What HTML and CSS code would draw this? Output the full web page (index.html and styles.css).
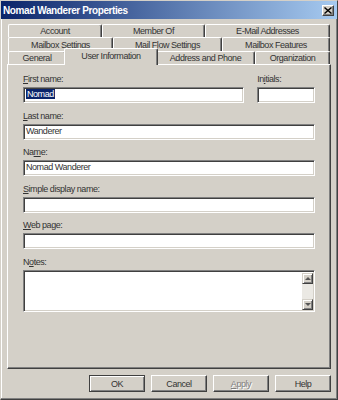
FILE: index.html
```html
<!DOCTYPE html>
<html lang="en">
<head>
    <meta charset="UTF-8">
    <title>Nomad Wanderer Properties</title>
    <link rel="stylesheet" href="styles.css">
</head>
<body>
    <div class="window">
        <!-- Title bar -->
        <div class="titlebar">
            <span class="title">Nomad Wanderer Properties</span>
            <span class="close-btn">
                <svg width="8" height="7" viewBox="0 0 8 7"><path d="M0.5 0.5L7.5 6.5M7.5 0.5L0.5 6.5" stroke="#000" stroke-width="1.4"/></svg>
            </span>
        </div>

        <!-- Tabs, three rows -->
        <div class="tabs">
            <div class="tab-row row-top">
                <div class="tab tab-account">Account</div>
                <div class="tab tab-member">Member Of</div>
                <div class="tab tab-email">E-Mail Addresses</div>
            </div>
            <div class="tab-row row-mid">
                <div class="tab tab-mbsettings">Mailbox Settings</div>
                <div class="tab tab-mailflow">Mail Flow Settings</div>
                <div class="tab tab-features">Mailbox Features</div>
            </div>
            <div class="tab-row row-front">
                <div class="tab tab-general">General</div>
                <div class="tab tab-userinfo selected">User Information</div>
                <div class="tab tab-address">Address and Phone</div>
                <div class="tab tab-org">Organization</div>
            </div>
        </div>

        <!-- Tab page -->
        <div class="panel">
            <div class="field-row">
                <div class="field field-first">
                    <div class="label"><u>F</u>irst name:</div>
                    <div class="box"><span class="selected-text">Nomad</span></div>
                </div>
                <div class="field field-initials">
                    <div class="label">In<u>i</u>tials:</div>
                    <div class="box"></div>
                </div>
            </div>
            <div class="field">
                <div class="label"><u>L</u>ast name:</div>
                <div class="box">Wanderer</div>
            </div>
            <div class="field">
                <div class="label">Na<u>m</u>e:</div>
                <div class="box">Nomad Wanderer</div>
            </div>
            <div class="field">
                <div class="label"><u>S</u>imple display name:</div>
                <div class="box"></div>
            </div>
            <div class="field">
                <div class="label"><u>W</u>eb page:</div>
                <div class="box"></div>
            </div>
            <div class="field">
                <div class="label">N<u>o</u>tes:</div>
                <div class="box notes">
                    <div class="notes-text"></div>
                    <div class="scrollbar">
                        <div class="scroll-btn"><span class="arrow-up"></span></div>
                        <div class="scroll-track"></div>
                        <div class="scroll-btn"><span class="arrow-down"></span></div>
                    </div>
                </div>
            </div>
        </div>

        <!-- Dialog buttons -->
        <div class="buttons">
            <div class="btn default">OK</div>
            <div class="btn">Cancel</div>
            <div class="btn disabled"><u>A</u>pply</div>
            <div class="btn">Help</div>
        </div>
    </div>
</body>
</html>
```

FILE: styles.css
```css
body {
    margin: 0;
    padding: 0;
    font-family: 'Liberation Sans', Arial, sans-serif;
    font-size: 9px;
    letter-spacing: -0.45px;
    color: #333;
    background: #d4d0c8;
}

.window {
    width: 338px;
    height: 400px;
    box-sizing: border-box;
    display: flex;
    flex-direction: column;
    background: #d4d0c8;
    border: 1px solid;
    border-color: #d4d0c8 #404040 #404040 #d4d0c8;
    box-shadow: inset -1px -1px #808080, inset 1px 1px #ffffff;
}

/* Title bar */
.titlebar {
    height: 18px;
    display: flex;
    align-items: center;
    justify-content: space-between;
    padding: 0 3px 0 2px;
    background: linear-gradient(to right, #0a246a, #a6caf0);
}

.title {
    color: #fff;
    font-weight: bold;
    font-size: 10px;
    letter-spacing: -0.4px;
}

.close-btn {
    width: 12px;
    height: 11px;
    box-sizing: border-box;
    display: flex;
    align-items: center;
    justify-content: center;
    background: #d4d0c8;
    border: 1px solid;
    border-color: #ffffff #404040 #404040 #ffffff;
    box-shadow: inset -1px -1px #808080;
}

/* Tabs */
.tabs {
    margin: 5px 6px 0 7px;
}

.tab-row {
    display: flex;
}

.row-top,
.row-front {
    height: 13px;
}

.row-mid {
    height: 14px;
}

.tab {
    box-sizing: border-box;
    height: 100%;
    display: flex;
    align-items: center;
    justify-content: center;
    background: #d4d0c8;
    border-top: 1px solid #ffffff;
    border-left: 1px solid #ffffff;
    border-right: 1px solid #404040;
    border-radius: 2px 2px 0 0;
    box-shadow: inset -1px 0 #808080;
    white-space: nowrap;
}

.tab-account { width: 94px; }
.tab-member { width: 103px; }
.tab-email { width: 125px; }
.tab-mbsettings { width: 105px; }
.tab-mailflow { width: 109px; }
.tab-features { width: 108px; }
.tab-general { width: 58px; }
.tab-userinfo { width: 90px; }
.tab-address { width: 99px; }
.tab-org { width: 75px; }

.tab.selected {
    position: relative;
    z-index: 1;
    height: 17px;
    margin: -3px -2px -1px;
    width: 94px;
    align-items: flex-start;
    padding-top: 2px;
}

/* Page */
.panel {
    flex: 1;
    margin: 0 6px 0 6px;
    padding: 8px 15px 0 15px;
    border: 1px solid;
    border-color: #ffffff #404040 #404040 #ffffff;
    box-shadow: inset -1px -1px #808080;
}

.field-row {
    display: flex;
    gap: 13px;
}

.field {
    margin-bottom: 6.6px;
}

.field-first {
    width: 222px;
}

.field-initials {
    width: 58px;
}

.label {
    height: 13px;
    line-height: 13px;
    margin-bottom: 1px;
}

.box {
    box-sizing: border-box;
    height: 16px;
    line-height: 13px;
    padding: 0 2px;
    background: #fff;
    border: 1px solid;
    border-color: #808080 #ffffff #ffffff #808080;
    box-shadow: inset 1px 1px #404040, inset -1px -1px #d4d0c8;
}

.selected-text {
    background: #0a246a;
    color: #fff;
    padding: 0 1px;
}

/* Notes with scrollbar */
.box.notes {
    height: 42px;
    display: flex;
    padding: 2px 1px 1px 2px;
}

.notes-text {
    flex: 1;
}

.scrollbar {
    width: 11px;
    display: flex;
    flex-direction: column;
}

.scroll-track {
    flex: 1;
    background: #ebe9e4;
}

.scroll-btn {
    box-sizing: border-box;
    height: 11px;
    display: flex;
    align-items: center;
    justify-content: center;
    background: #d4d0c8;
    border: 1px solid;
    border-color: #d4d0c8 #404040 #404040 #d4d0c8;
    box-shadow: inset 1px 1px #ffffff, inset -1px -1px #808080;
}

.arrow-up {
    width: 0;
    height: 0;
    border-left: 3px solid transparent;
    border-right: 3px solid transparent;
    border-bottom: 3px solid #555;
}

.arrow-down {
    width: 0;
    height: 0;
    border-left: 3px solid transparent;
    border-right: 3px solid transparent;
    border-top: 3px solid #555;
}

/* Buttons */
.buttons {
    display: flex;
    justify-content: flex-end;
    gap: 6px;
    margin: 6px 6px 7px 0;
}

.btn {
    box-sizing: border-box;
    width: 56px;
    height: 17px;
    display: flex;
    align-items: center;
    justify-content: center;
    background: #d4d0c8;
    border: 1px solid;
    border-color: #ffffff #404040 #404040 #ffffff;
    box-shadow: inset -1px -1px #808080;
}

.btn.default {
    border-color: #404040;
    box-shadow: inset 1px 1px #ffffff, inset -1px -1px #808080;
}

.btn.disabled {
    color: #808080;
    text-shadow: 1px 1px #ffffff;
}
```
